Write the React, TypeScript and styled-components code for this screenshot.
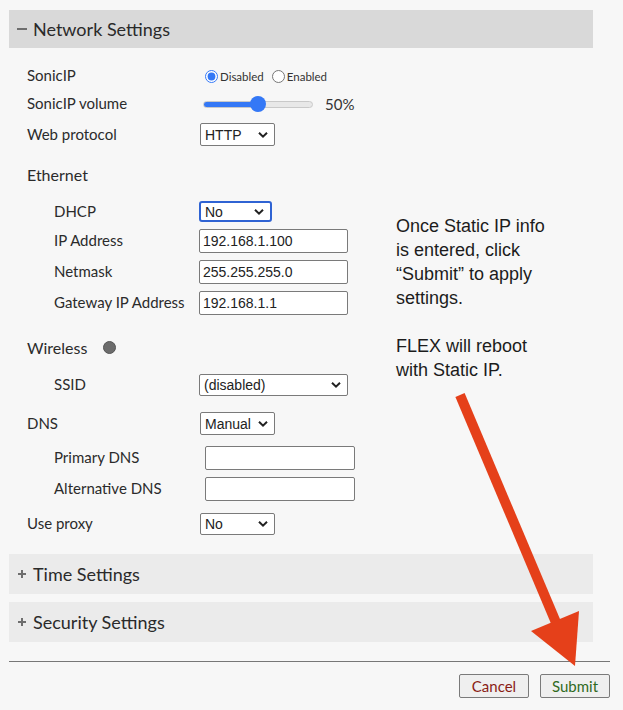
import React from 'react';
import styled, { createGlobalStyle } from 'styled-components';

const Global = createGlobalStyle`
  html, body { margin: 0; padding: 0; background: #f7f7f7; }
  body { font-family: 'Lato', 'Noto Sans', sans-serif; color: #333; }
  * { box-sizing: border-box; }
`;

const Page = styled.div`
  position: relative;
  width: 623px;
  height: 710px;
  padding: 10px 0 0 9px;
  overflow: hidden;
  background: #f7f7f7;
`;

const PanelHeader = styled.div<{ $open?: boolean; $mt?: number }>`
  width: 584px;
  height: ${(p) => (p.$open ? 38 : 40)}px;
  margin-top: ${(p) => p.$mt ?? 0}px;
  background: ${(p) => (p.$open ? '#d9d9d9' : '#ebebeb')};
  display: flex;
  align-items: center;
  padding-left: 8px;
  font-size: 18px;
  color: #2a2a2a;
`;

const Sign = styled.span<{ $plus?: boolean }>`
  position: relative;
  width: 10px;
  height: 10px;
  margin-right: ${(p) => (p.$plus ? 5 : 6)}px;
  margin-left: ${(p) => (p.$plus ? 1 : 0)}px;
  &::before {
    content: '';
    position: absolute;
    left: 0;
    top: 4px;
    width: ${(p) => (p.$plus ? 8 : 10)}px;
    height: 2px;
    background: #6e6e6e;
  }
  &::after {
    content: '';
    display: ${(p) => (p.$plus ? 'block' : 'none')};
    position: absolute;
    left: 3px;
    top: 1px;
    width: 2px;
    height: 8px;
    background: #6e6e6e;
  }
`;

const Form = styled.div`
  display: flex;
  flex-direction: column;
  padding-left: 18px;
`;

const Row = styled.div<{ $mt: number; $h: number; $ctrl?: number }>`
  display: grid;
  grid-template-columns: ${(p) => (p.$ctrl ?? 200) - 27}px 1fr;
  align-items: center;
  margin-top: ${(p) => p.$mt}px;
  height: ${(p) => p.$h}px;
`;

const Label = styled.span<{ $indent?: boolean }>`
  font-size: 15px;
  color: #2b2b2b;
  padding-left: ${(p) => (p.$indent ? 27 : 0)}px;
  padding-bottom: 2px;
  white-space: nowrap;
`;

const Heading = styled.div<{ $mt: number }>`
  margin-top: ${(p) => p.$mt}px;
  height: 20px;
  display: flex;
  align-items: center;
  gap: 16px;
  font-size: 16px;
  color: #2b2b2b;
`;

const StatusDot = styled.span`
  width: 13px;
  height: 13px;
  border-radius: 50%;
  background: #6c6c6c;
  border: 1px solid #555;
`;

const RadioGroup = styled.div`
  display: flex;
  align-items: center;
  padding-left: 5px;
`;

const RadioLabel = styled.label`
  display: inline-flex;
  align-items: center;
  font-size: 11.5px;
  color: #333;
  margin-right: 8px;
`;

const Radio = styled.input`
  margin: 0 2px 0 0;
  width: 13px;
  height: 13px;
  accent-color: #3478f6;
`;

const SliderWrap = styled.div`
  display: flex;
  align-items: center;
  gap: 12px;
  padding-left: 3px;
  font-size: 15px;
`;

const Range = styled.input<{ $pct: number }>`
  -webkit-appearance: none;
  appearance: none;
  width: 110px;
  height: 16px;
  margin: 0;
  background: transparent;
  &::-webkit-slider-runnable-track {
    height: 7px;
    border-radius: 4px;
    border: 1px solid #c9c9c9;
    background: linear-gradient(to right, #3478f6 ${(p) => p.$pct}%, #e8e8e8 ${(p) => p.$pct}%);
  }
  &::-webkit-slider-thumb {
    -webkit-appearance: none;
    width: 16px;
    height: 16px;
    border-radius: 50%;
    background: #3478f6;
    margin-top: -5.5px;
    border: none;
  }
`;

const SelectWrap = styled.div<{ $w: number; $h: number; $focus?: boolean; $dx?: number }>`
  position: relative;
  width: ${(p) => p.$w}px;
  height: ${(p) => p.$h}px;
  margin-left: ${(p) => p.$dx ?? 0}px;
  border: ${(p) => (p.$focus ? '2px solid #2f63d3' : '1px solid #7a7a7a')};
  border-radius: ${(p) => (p.$focus ? 3 : 2)}px;
  background: #fff;
  display: flex;
  align-items: center;
`;

const Select = styled.select`
  appearance: none;
  -webkit-appearance: none;
  border: none;
  outline: none;
  background: transparent;
  width: 100%;
  height: 100%;
  padding: 0 0 0 4px;
  font-family: 'Liberation Sans', Arial, sans-serif;
  font-size: 14px;
  color: #222;
`;

const Chevron = styled.svg`
  position: absolute;
  right: 6px;
  top: 50%;
  transform: translateY(-50%);
  pointer-events: none;
`;

const TextInput = styled.input<{ $w: number; $dx?: number }>`
  width: ${(p) => p.$w}px;
  height: 24px;
  margin-left: ${(p) => p.$dx ?? 0}px;
  border: 1px solid #7a7a7a;
  border-radius: 2px;
  background: #fff;
  padding: 0 0 0 3px;
  font-family: 'Liberation Sans', Arial, sans-serif;
  font-size: 14px;
  color: #222;
  outline: none;
`;

const Footer = styled.div`
  width: 601px;
  margin-top: 19px;
  border-top: 1px solid #777;
  display: flex;
  justify-content: flex-end;
  gap: 11px;
  padding-top: 12px;
`;

const Button = styled.button<{ $tone: 'cancel' | 'submit' }>`
  width: 70px;
  height: 24px;
  border: 1px solid #7a7a7a;
  border-radius: 2px;
  background: #efefef;
  font-family: 'Lato', 'Noto Sans', sans-serif;
  font-size: 15px;
  color: ${(p) => (p.$tone === 'cancel' ? '#8a1c14' : '#2f6a1e')};
  padding: 0;
`;

const Note = styled.div`
  position: absolute;
  left: 396px;
  top: 214px;
  font-family: 'Liberation Sans', Arial, sans-serif;
  font-size: 18px;
  line-height: 24px;
  color: #1c1c1c;
`;

const NoteGap = styled.div`
  height: 24px;
`;

const ArrowLayer = styled.svg`
  position: absolute;
  left: 0;
  top: 0;
  pointer-events: none;
`;

const Dropdown = ({ value, w, h, focus, dx, options }: { value: string; w: number; h: number; focus?: boolean; dx?: number; options?: string[] }) => (
  <SelectWrap $w={w} $h={h} $focus={focus} $dx={dx}>
    <Select defaultValue={value}>
      {(options ?? [value]).map((o) => (
        <option key={o}>{o}</option>
      ))}
    </Select>
    <Chevron width="10" height="7" viewBox="0 0 10 7">
      <path d="M1 1.2 L5 5.2 L9 1.2" fill="none" stroke="#222" strokeWidth="2" />
    </Chevron>
  </SelectWrap>
);

export default function App() {
  return (
    <Page>
      <Global />
      <PanelHeader $open>
        <Sign />
        Network Settings
      </PanelHeader>
      <Form>
        <Row $mt={18} $h={20}>
          <Label>SonicIP</Label>
          <RadioGroup>
            <RadioLabel>
              <Radio type="radio" name="sonic" defaultChecked />
              Disabled
            </RadioLabel>
            <RadioLabel>
              <Radio type="radio" name="sonic" />
              Enabled
            </RadioLabel>
          </RadioGroup>
        </Row>
        <Row $mt={8} $h={20}>
          <Label>SonicIP volume</Label>
          <SliderWrap>
            <Range type="range" min={0} max={100} defaultValue={50} $pct={50} />
            50%
          </SliderWrap>
        </Row>
        <Row $mt={9} $h={23}>
          <Label>Web protocol</Label>
          <Dropdown value="HTTP" w={75} h={23} options={['HTTP', 'HTTPS']} />
        </Row>

        <Heading $mt={18}>Ethernet</Heading>
        <Row $mt={17} $h={21}>
          <Label $indent>DHCP</Label>
          <Dropdown value="No" w={73} h={21} focus dx={-1} options={['No', 'Yes']} />
        </Row>
        <Row $mt={7} $h={24}>
          <Label $indent>IP Address</Label>
          <TextInput $w={149} $dx={-1} defaultValue="192.168.1.100" />
        </Row>
        <Row $mt={7} $h={24}>
          <Label $indent>Netmask</Label>
          <TextInput $w={149} $dx={-1} defaultValue="255.255.255.0" />
        </Row>
        <Row $mt={7} $h={24}>
          <Label $indent>Gateway IP Address</Label>
          <TextInput $w={149} $dx={-1} defaultValue="192.168.1.1" />
        </Row>

        <Heading $mt={22}>
          Wireless
          <StatusDot />
        </Heading>
        <Row $mt={17} $h={22}>
          <Label $indent>SSID</Label>
          <Dropdown value="(disabled)" w={149} h={22} dx={-1} />
        </Row>

        <Row $mt={16} $h={23}>
          <Label>DNS</Label>
          <Dropdown value="Manual" w={75} h={23} options={['Manual', 'Auto']} />
        </Row>
        <Row $mt={11} $h={24}>
          <Label $indent>Primary DNS</Label>
          <TextInput $w={150} $dx={5} />
        </Row>
        <Row $mt={7} $h={24}>
          <Label $indent>Alternative DNS</Label>
          <TextInput $w={150} $dx={5} />
        </Row>
        <Row $mt={12} $h={22}>
          <Label>Use proxy</Label>
          <Dropdown value="No" w={75} h={22} options={['No', 'Yes']} />
        </Row>
      </Form>

      <PanelHeader $mt={19}>
        <Sign $plus />
        Time Settings
      </PanelHeader>
      <PanelHeader $mt={8}>
        <Sign $plus />
        Security Settings
      </PanelHeader>

      <Footer>
        <Button $tone="cancel">Cancel</Button>
        <Button $tone="submit">Submit</Button>
      </Footer>

      <Note>
        Once Static IP info
        <br />
        is entered, click
        <br />
        “Submit” to apply
        <br />
        settings.
        <NoteGap />
        FLEX will reboot
        <br />
        with Static IP.
      </Note>

      <ArrowLayer width="623" height="710" viewBox="0 0 623 710">
        <line x1="460" y1="395" x2="560" y2="632" stroke="#e5401a" strokeWidth="10" />
        <polygon points="531,631 579,611 575,666" fill="#e5401a" />
      </ArrowLayer>
    </Page>
  );
}
